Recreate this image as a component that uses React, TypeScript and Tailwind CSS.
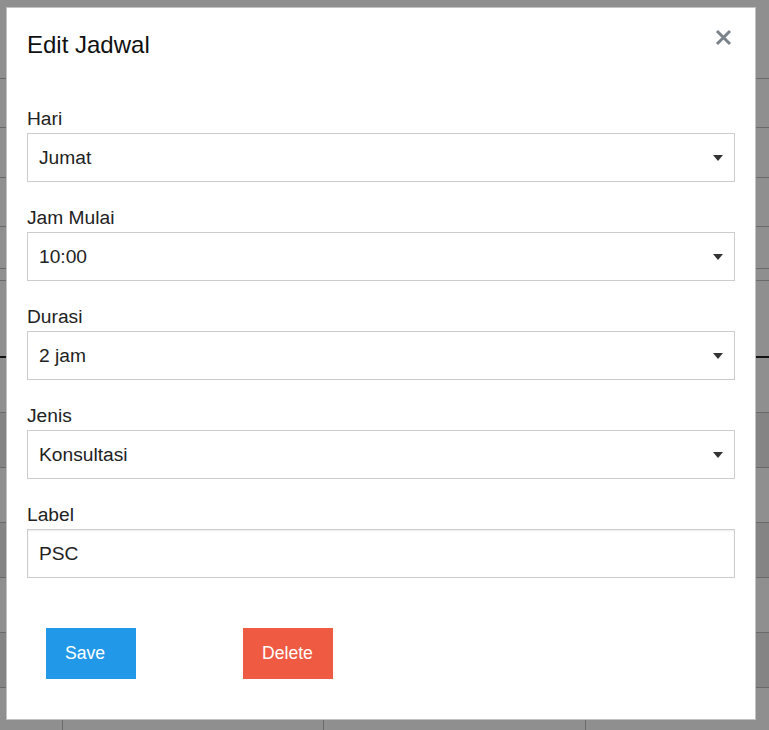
import React from 'react';

// background calendar rows (dimmed by the modal overlay)
const rows = [
  { id: 'r0', cls: 'h-[79px] border-b border-[#bdbdbd] bg-white', cols: false },
  { id: 'r1', cls: 'h-[49px] border-b border-[#bdbdbd] bg-white', cols: true },
  { id: 'r2', cls: 'h-[50px] border-b border-[#bdbdbd] bg-white', cols: true },
  { id: 'r3', cls: 'h-[49px] border-b border-[#bdbdbd] bg-white', cols: true },
  { id: 'r4', cls: 'h-[42px] border-b border-[#bdbdbd] bg-white', cols: true },
  { id: 'r5', cls: 'h-[12px] border-b border-[#bdbdbd] bg-white', cols: true },
  { id: 'r6', cls: 'h-[77px] border-b-2 border-[#222222] bg-white', cols: true },
  { id: 'r7', cls: 'h-[55px] border-b border-[#bdbdbd] bg-white', cols: true },
  { id: 'r8', cls: 'h-[55px] border-b border-[#bdbdbd] bg-[#ececec]', cols: true },
  { id: 'r9', cls: 'h-[55px] border-b border-[#bdbdbd] bg-white', cols: true },
  { id: 'r10', cls: 'h-[55px] border-b border-[#bdbdbd] bg-[#ececec]', cols: true },
  { id: 'r11', cls: 'h-[55px] border-b border-[#bdbdbd] bg-white', cols: true },
  { id: 'r12', cls: 'h-[55px] border-b border-[#bdbdbd] bg-[#ececec]', cols: true },
  { id: 'r13', cls: 'h-[60px] bg-white', cols: true },
];

const selects = [
  { label: 'Hari', value: 'Jumat' },
  { label: 'Jam Mulai', value: '10:00' },
  { label: 'Durasi', value: '2 jam' },
  { label: 'Jenis', value: 'Konsultasi' },
];

const SelectField: React.FC<{ label: string; value: string }> = ({ label, value }) => {
  return (
    <div className="mb-[25px]">
      <label className="mb-[3px] block text-[19.2px] leading-[22px] text-[#222]">{label}</label>
      <div className="flex h-[49px] items-center justify-between border border-[#cccccc] bg-white pl-[11px] pr-[11px] text-[19.2px] leading-[22px] text-[#222]">
        <span>{value}</span>
        <svg width="10" height="6" viewBox="0 0 10 6">
          <path d="M0 0h10L5 6z" fill="#333" />
        </svg>
      </div>
    </div>
  );
};

export default function App() {
  return (
    <div
      className="relative h-[730px] w-[769px] overflow-hidden bg-white"
      style={{ fontFamily: '"Liberation Sans", Arial, sans-serif' }}
    >
      {/* Calendar behind */}
      <div className="flex flex-col">
        {rows.map((row) => (
          <div key={row.id} className={row.cls}>
            {row.cols && (
              <div className="grid h-full grid-cols-[62px_261px_262px_1fr]">
                <div />
                <div className="border-l border-[#bdbdbd]" />
                <div className="border-l border-[#bdbdbd]" />
                <div className="border-l border-[#bdbdbd]" />
              </div>
            )}
          </div>
        ))}
      </div>

      {/* Overlay */}
      <div className="fixed inset-0 bg-black/[0.44]">
        <div className="absolute left-[6px] top-[7px] w-[750px] border border-[#c2c2c2] bg-white px-[20px] pb-[40px] pt-[19px]">
          <button className="absolute right-[23px] top-[21px]" aria-label="Close">
            <svg width="17" height="17" viewBox="0 0 17 17">
              <path d="M2 2L15 15M15 2L2 15" stroke="#7a828a" strokeWidth="3" />
            </svg>
          </button>

          <h2 className="mb-[45px] text-[24px] leading-normal text-[#111]">Edit Jadwal</h2>

          {selects.map((s) => (
            <SelectField key={s.label} label={s.label} value={s.value} />
          ))}

          <div>
            <label className="mb-[3px] block text-[19.2px] leading-[22px] text-[#222]">Label</label>
            <input
              readOnly
              value="PSC"
              className="block h-[49px] w-full border border-[#cccccc] bg-white pl-[11px] text-[19.2px] text-[#222] shadow-[inset_0_1px_2px_rgba(0,0,0,0.08)] outline-none"
            />
          </div>

          <div className="mt-[50px] flex gap-[107px] pl-[19px]">
            <button className="h-[51px] min-w-[90px] bg-[#2299e8] px-[19px] text-left text-[17.6px] text-white">
              Save
            </button>
            <button className="h-[51px] min-w-[90px] bg-[#ef5a42] px-[19px] text-left text-[17.6px] text-white">
              Delete
            </button>
          </div>
        </div>
      </div>
    </div>
  );
}
